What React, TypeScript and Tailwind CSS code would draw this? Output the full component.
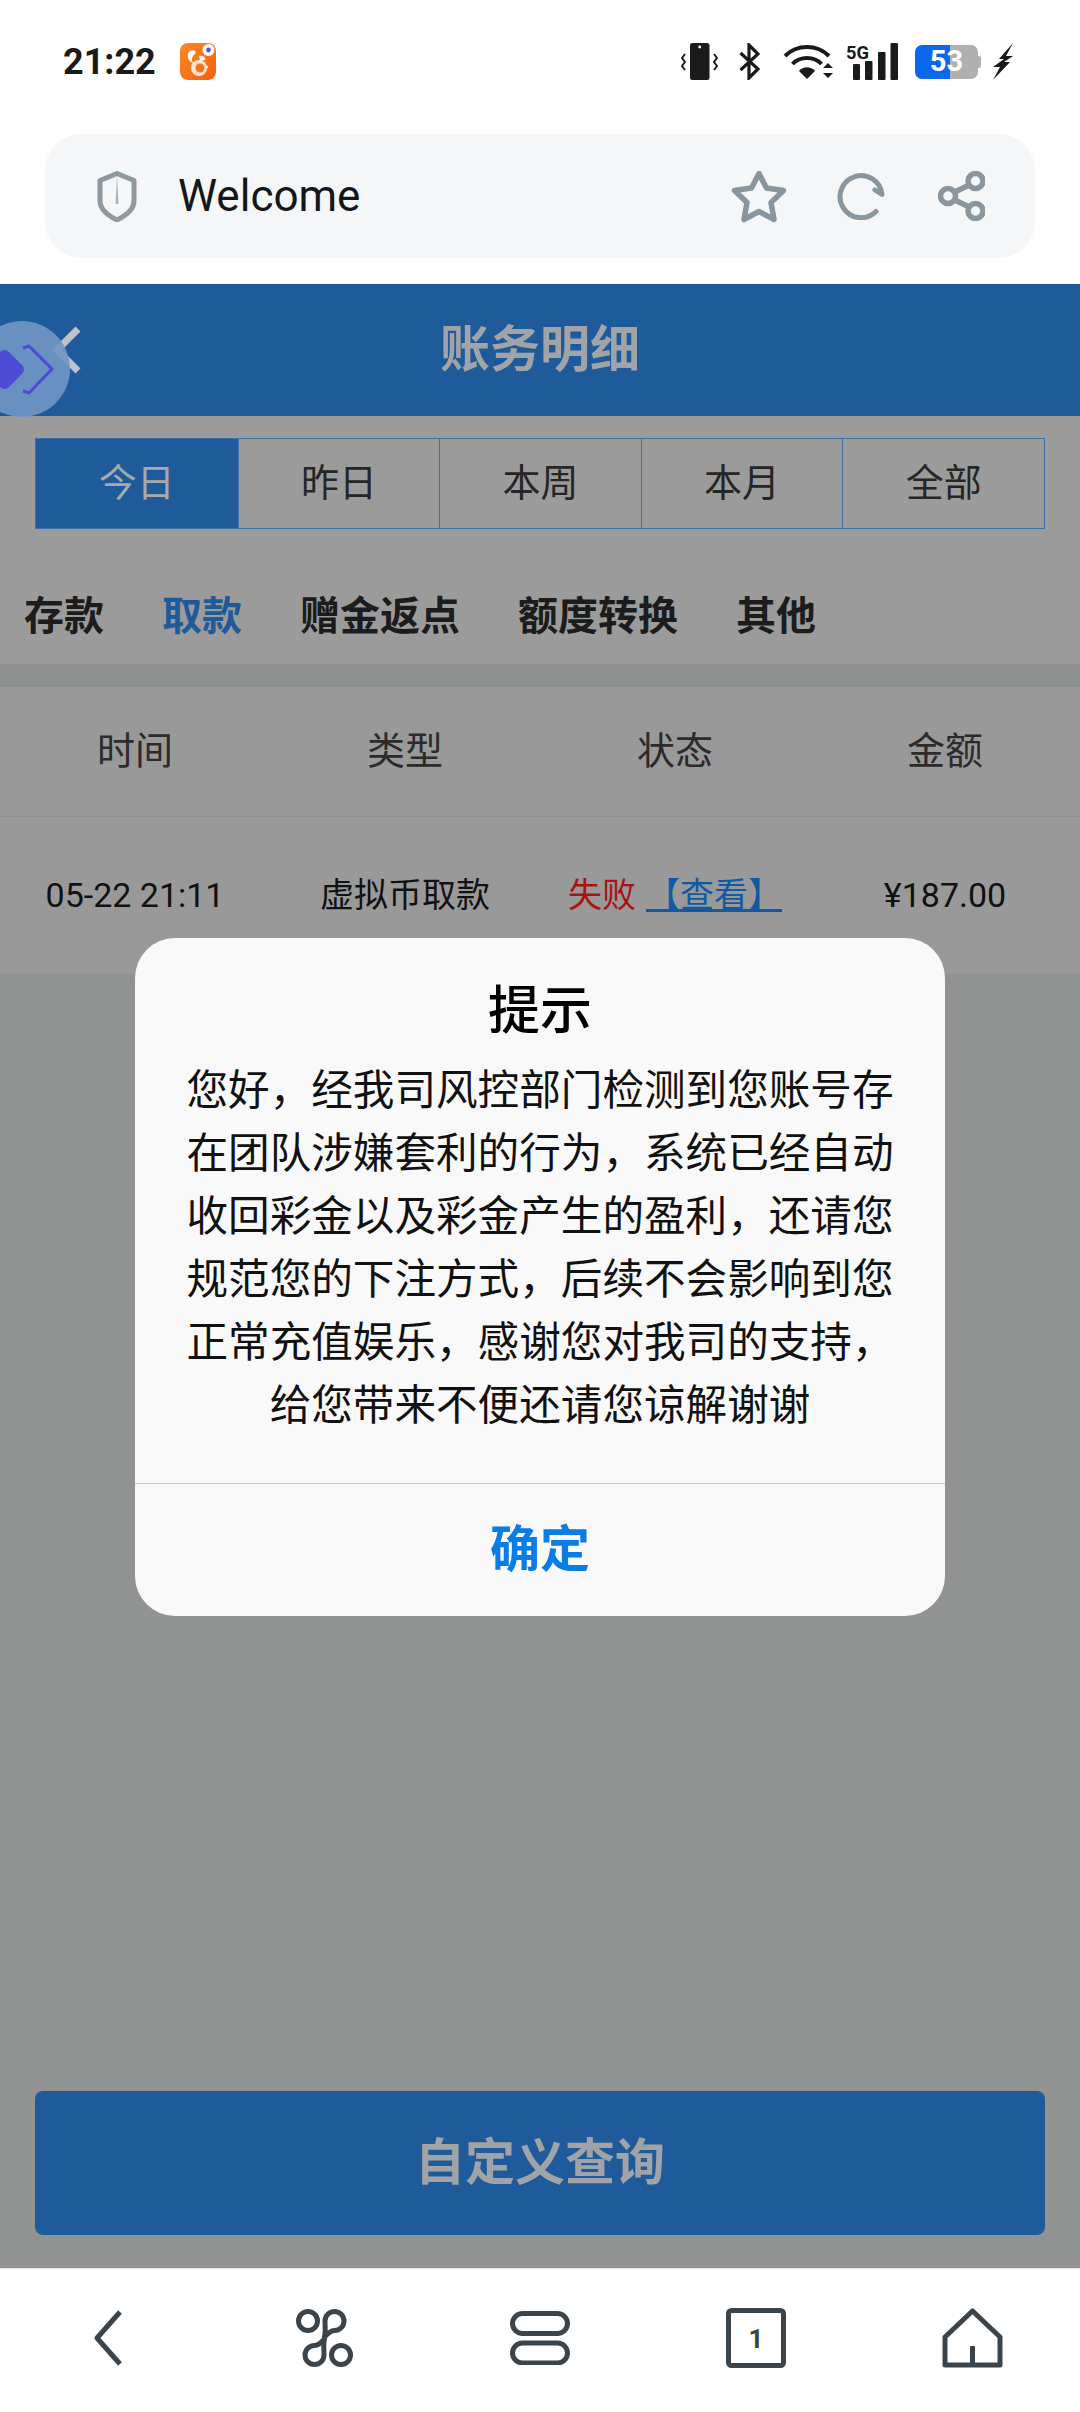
import React from 'react';

const tabs = ['今日', '昨日', '本周', '本月', '全部'];
const categories = ['存款', '取款', '赠金返点', '额度转换', '其他'];
const columns = ['时间', '类型', '状态', '金额'];

function VibrateIcon() {
  return (
    <svg width="37" height="37" viewBox="0 0 37 37" fill="none">
      <rect x="9" y="0" width="19.5" height="37" rx="2.5" fill="#1a1a1a" />
      <circle cx="18.7" cy="4" r="1.4" fill="#fff" />
      <path d="M4 11 L1 15 L4 19 L1 23 L4 27" stroke="#1a1a1a" strokeWidth="2" />
      <path d="M33 11 L36 15 L33 19 L36 23 L33 27" stroke="#1a1a1a" strokeWidth="2" />
    </svg>
  );
}

function BluetoothIcon() {
  return (
    <svg width="21" height="37" viewBox="0 0 21 37" fill="none">
      <path d="M1.5 10 L19 26 L10 35 V2 L19 11 L1.5 27" stroke="#1a1a1a" strokeWidth="3.2" />
    </svg>
  );
}

function WifiIcon() {
  return (
    <svg width="50" height="37" viewBox="0 0 50 37" fill="none">
      <path d="M2 13 C14 1 34 1 46 13" stroke="#1a1a1a" strokeWidth="4" />
      <path d="M9.5 21 C17 13 31 13 38.5 21" stroke="#1a1a1a" strokeWidth="4" />
      <path d="M16 28 C20 23 28 23 32 28 L24 36 Z" fill="#1a1a1a" />
      <path d="M40 25 L45 20 L50 25 Z M40 30 L50 30 L45 35 Z" fill="#1a1a1a" />
    </svg>
  );
}

function SignalIcon() {
  return (
    <svg width="52" height="37" viewBox="0 0 52 37">
      <text x="0" y="16" fontFamily="Roboto" fontWeight="700" fontSize="19" textLength="23" lengthAdjust="spacingAndGlyphs" fill="#1a1a1a">5G</text>
      <rect x="7" y="21" width="7" height="16" rx="1" fill="#1a1a1a" />
      <rect x="19" y="18" width="7.5" height="19" rx="1" fill="#1a1a1a" />
      <rect x="32" y="9" width="7.5" height="28" rx="1" fill="#1a1a1a" />
      <rect x="44.5" y="0" width="7.5" height="37" rx="1" fill="#1a1a1a" />
    </svg>
  );
}

function Battery() {
  return (
    <div className="relative flex h-[34px] w-[66px] items-center justify-center">
      <div className="absolute left-0 top-0 h-[34px] w-[35px] rounded-l-[7px] bg-[#0a68ee]" />
      <div className="absolute left-[35px] top-0 h-[34px] w-[28px] rounded-r-[7px] bg-[#b0b0b0]" />
      <div className="absolute right-0 top-[11px] h-[12px] w-[3px] rounded-r-[2px] bg-[#b0b0b0]" />
      <span className="relative mr-[3px] text-[29px] font-bold leading-none text-white">53</span>
    </div>
  );
}

function BoltIcon() {
  return (
    <svg width="20" height="37" viewBox="0 0 20 37">
      <path d="M20 0 L6 16 L11 16 L0 24 L7 24 L0 37 L17 19 L11 19 L20 13 L13 13 Z" fill="#1a1a1a" />
    </svg>
  );
}

function UcIcon() {
  return (
    <svg width="36" height="37" viewBox="0 0 36 37">
      <defs>
        <linearGradient id="uc" x1="0" y1="0" x2="1" y2="1">
          <stop offset="0" stopColor="#f98a24" />
          <stop offset="1" stopColor="#fb5e0c" />
        </linearGradient>
      </defs>
      <rect width="36" height="37" rx="8" fill="url(#uc)" />
      <path d="M10 8 C14 6 17 8 15 11 C12 13 11 17 13 20 C9 19 5 12 10 8 Z" fill="#fff" />
      <path d="M19 13 C23 12 26 15 25 17 L20 18 Z" fill="#fff" />
      <circle cx="19" cy="25" r="8" fill="#fbe6d2" />
      <circle cx="20" cy="25" r="4.5" fill="#f4761a" />
      <circle cx="27" cy="24" r="1.3" fill="#fff" />
      <circle cx="28.5" cy="7" r="6" fill="#fff" />
      <circle cx="28.5" cy="7" r="2.4" fill="#5b4fe0" />
    </svg>
  );
}

function ShieldIcon() {
  return (
    <svg width="40" height="51" viewBox="0 0 40 51" fill="none">
      <path d="M20 2.5 L37 9.5 V30 C37 38 28 45 20 49 C12 45 3 38 3 30 V9.5 Z" stroke="#8d989f" strokeWidth="5" strokeLinejoin="round" />
      <path d="M20 5 L21.5 33 H18.5 Z" fill="#a9b2b7" />
    </svg>
  );
}

function StarIcon() {
  return (
    <svg width="56" height="53" viewBox="0 0 56 53" fill="none">
      <path d="M28 3.5 L35.5 18 L52.5 20.5 L40 32.5 L43 49.5 L28 41.5 L13 49.5 L16 32.5 L3.5 20.5 L20.5 18 Z" stroke="#8a969e" strokeWidth="5.5" strokeLinejoin="round" />
    </svg>
  );
}

function ReloadIcon() {
  return (
    <svg width="48" height="48" viewBox="0 0 48 48" fill="none">
      <path d="M39 39.5 A21 21 0 1 1 45 22.5 L38 18" stroke="#8a969e" strokeWidth="5" strokeLinecap="round" strokeLinejoin="round" />
    </svg>
  );
}

function ShareIcon() {
  return (
    <svg width="47" height="50" viewBox="0 0 47 50" fill="none" stroke="#8a969e" strokeWidth="5.5">
      <circle cx="37.5" cy="10" r="7.5" />
      <circle cx="10" cy="25" r="7.5" />
      <circle cx="37.5" cy="40" r="7.5" />
      <path d="M17 21 L31 14 M17 29 L31 36" />
    </svg>
  );
}

function NavBack() {
  return (
    <svg width="31" height="56" viewBox="0 0 31 56" fill="none">
      <path d="M27 2 L4 28 L27 54" stroke="#3a444a" strokeWidth="5" strokeLinejoin="round" />
    </svg>
  );
}

function NavApps() {
  const drop = 'M28 29 C30 25 29 18 29 12 A9.5 9.5 0 1 1 38.5 21.5 C34 21.5 31 25 28 29 Z';
  return (
    <svg width="57" height="58" viewBox="0 0 57 58" fill="none" stroke="#3a444a" strokeWidth="5">
      <circle cx="12" cy="12" r="9.5" />
      <circle cx="45" cy="46" r="9.5" />
      <path d={drop} />
      <path d={drop} transform="rotate(180 28.5 29)" />
    </svg>
  );
}

function NavStack() {
  return (
    <svg width="60" height="54" viewBox="0 0 60 54" fill="none" stroke="#3a444a" strokeWidth="5">
      <rect x="2.5" y="2.5" width="55" height="20" rx="10" />
      <rect x="2.5" y="32" width="55" height="20" rx="10" />
    </svg>
  );
}

function NavTabs() {
  return (
    <svg width="60" height="60" viewBox="0 0 60 60" fill="none">
      <rect x="2.5" y="2.5" width="55" height="55" rx="3" stroke="#3a444a" strokeWidth="5" />
      <text x="30" y="40" textAnchor="middle" fontFamily="Roboto" fontWeight="700" fontSize="26" fill="#3a444a">1</text>
    </svg>
  );
}

function NavHome() {
  return (
    <svg width="61" height="60" viewBox="0 0 61 60" fill="none" stroke="#3a444a" strokeWidth="5" strokeLinejoin="round">
      <path d="M30.5 3 L58 29 V57 H3 V29 Z" />
      <path d="M30.5 38 V57" />
    </svg>
  );
}

function FloatBall() {
  return (
    <div className="absolute left-[-26px] top-[321px] flex h-[96px] w-[96px] items-center justify-center rounded-full bg-[#7096c4]/90">
      <svg width="96" height="96" viewBox="0 0 96 96" fill="none">
        <rect x="15" y="33" width="31" height="31" rx="6" transform="rotate(45 30.5 48.5)" fill="#4c4bd6" />
        <path d="M49 27 L55 25 L78 48 L55 72 L49 70" stroke="#4c4bd6" strokeWidth="3" strokeLinejoin="round" />
      </svg>
    </div>
  );
}

function Dialog() {
  return (
    <div className="absolute left-[135px] top-[938px] flex h-[678px] w-[810px] flex-col rounded-[40px] bg-[#f9f9f9]">
      <div className="flex h-[545px] flex-col items-center">
        <h2 className="mt-[40px] text-[52px] font-medium leading-[68px] text-black">提示</h2>
        <p className="mt-[13px] w-[714px] text-center text-[41.6px] leading-[63px] text-[#111]">
          您好，经我司风控部门检测到您账号存在团队涉嫌套利的行为，系统已经自动收回彩金以及彩金产生的盈利，还请您规范您的下注方式，后续不会影响到您正常充值娱乐，感谢您对我司的支持，给您带来不便还请您谅解谢谢
        </p>
      </div>
      <button className="flex flex-1 items-center justify-center border-t border-[#c4c4c4] text-[50px] font-bold text-[#0a7ce6]">
        确定
      </button>
    </div>
  );
}

export default function App() {
  return (
    <div className="relative flex h-[2412px] w-[1080px] flex-col overflow-hidden bg-white font-['Roboto','Noto_Sans_CJK_SC',sans-serif]">
      {/* Status bar */}
      <div className="flex h-[134px] items-start justify-between pl-[63px] pr-[67px] pt-[43px]">
        <div className="flex h-[37px] items-center">
          <span className="text-[36px] font-bold leading-none text-[#1a1a1a]">21:22</span>
          <div className="ml-[24px]">
            <UcIcon />
          </div>
        </div>
        <div className="flex h-[37px] items-center">
          <VibrateIcon />
          <div className="ml-[21px]"><BluetoothIcon /></div>
          <div className="ml-[23px]"><WifiIcon /></div>
          <div className="ml-[13px]"><SignalIcon /></div>
          <div className="ml-[17px]"><Battery /></div>
          <div className="ml-[12px]"><BoltIcon /></div>
        </div>
      </div>

      {/* Address bar */}
      <div className="px-[45px] pb-[26px]">
        <div className="flex h-[124px] items-center rounded-[36px] bg-[#f4f6f8] pl-[52px] pr-[50px]">
          <ShieldIcon />
          <span className="ml-[41px] text-[44px] leading-none text-[#14171a]">Welcome</span>
          <div className="ml-auto flex items-center">
            <StarIcon />
            <div className="ml-[50px]"><ReloadIcon /></div>
            <div className="ml-[53px]"><ShareIcon /></div>
          </div>
        </div>
      </div>

      {/* Page under the dim layer */}
      <div className="flex h-[132px] items-center justify-center bg-[#1f5a9a]">
        <h1 className="text-[50px] font-bold text-[#a0a4a8]">账务明细</h1>
      </div>

      <div className="bg-[#9b9b9b] px-[35px] pt-[22px]">
        <div className="grid h-[91px] grid-cols-5 border border-[#3f6fa8]">
          {tabs.map((t, i) => (
            <div
              key={t}
              className={`flex items-center justify-center text-[38px] ${
                i === 0 ? 'bg-[#1f5a9a] text-[#a6aaae]' : 'border-l border-[#3f6fa8] text-[#262626]'
              }`}
            >
              {t}
            </div>
          ))}
        </div>
      </div>

      <div className="flex h-[135px] items-center gap-[58px] bg-[#9b9b9b] pl-[24px] pt-[40px]">
        {categories.map((c, i) => (
          <span key={c} className={`text-[40px] font-bold ${i === 1 ? 'text-[#1f5a9a]' : 'text-[#1c1c1c]'}`}>
            {c}
          </span>
        ))}
      </div>

      <div className="h-[23px] bg-[#8f9190]" />

      <div className="grid h-[130px] grid-cols-4 border-b border-[#8e8e8e] bg-[#999999]">
        {columns.map(c => (
          <div key={c} className="flex items-center justify-center text-[38px] text-[#2b2b2b]">
            {c}
          </div>
        ))}
      </div>

      <div className="grid h-[157px] grid-cols-4 bg-[#999999] text-[34px] text-[#111]">
        <div className="flex items-center justify-center">05-22 21:11</div>
        <div className="flex items-center justify-center">虚拟币取款</div>
        <div className="flex items-center justify-center gap-[10px]">
          <span className="text-[#a81414]">失败</span>
          <span className="text-[#1259a3] underline">【查看】</span>
        </div>
        <div className="flex items-center justify-center">¥187.00</div>
      </div>

      <div className="flex flex-1 flex-col justify-end bg-[#919392] px-[35px] pb-[33px]">
        <button className="h-[144px] rounded-[8px] bg-[#1f5a9a] text-[50px] font-bold text-[#a0a4a8]">自定义查询</button>
      </div>

      {/* Browser toolbar */}
      <div className="grid h-[144px] grid-cols-5 items-center border-t border-[#e4e4e4] bg-white pb-[6px]">
        <div className="flex justify-center"><NavBack /></div>
        <div className="flex justify-center"><NavApps /></div>
        <div className="flex justify-center"><NavStack /></div>
        <div className="flex justify-center"><NavTabs /></div>
        <div className="flex justify-center"><NavHome /></div>
      </div>

      {/* Header back arrow */}
      <svg className="absolute left-[50px] top-[326px]" width="32" height="48" viewBox="0 0 32 48" fill="none">
        <path d="M28 3 L7 24 L28 45" stroke="#bfc3c7" strokeWidth="7" />
      </svg>

      <FloatBall />
      <Dialog />
    </div>
  );
}
